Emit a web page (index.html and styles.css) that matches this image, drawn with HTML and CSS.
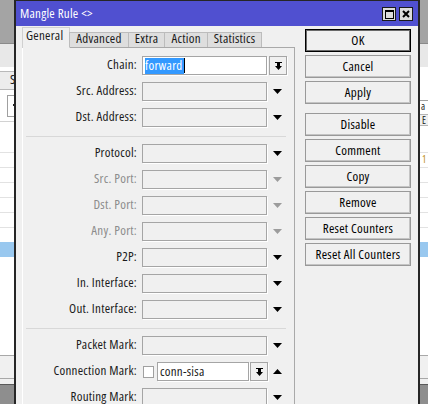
FILE: index.html
```html
<!DOCTYPE html>
<html>
<head>
<meta charset="utf-8">
<title>Mangle Rule</title>
<link rel="stylesheet" href="styles.css">
</head>
<body>
<div class="desk">
  <div class="app">
    <div class="app-top"></div>
    <div class="app-toolbar"></div>
    <div class="app-main">
      <div class="strip strip-left">
        <div class="ls-tab">S</div>
        <div class="ls-btn"><span class="ls-mark"></span></div>
        <div class="ls-head"></div>
        <div class="rows">
          <div class="lrow"></div><div class="lrow"></div><div class="lrow"></div>
          <div class="lrow"></div><div class="lrow"></div><div class="lrow"></div>
          <div class="lrow selected"></div>
        </div>
      </div>
      <div class="app-mid"></div>
      <div class="strip strip-right">
        <div class="rs-input">a</div>
        <div class="rs-head">E</div>
        <div class="rows">
          <div class="lrow num">1</div><div class="lrow"></div><div class="lrow"></div>
          <div class="lrow"></div><div class="lrow"></div><div class="lrow"></div>
          <div class="lrow selected"></div>
        </div>
      </div>
    </div>
    <div class="app-status"></div>
    <div class="app-foot"></div>
    <div class="app-bottom"></div>
  </div>

  <div class="win">
    <div class="titlebar">
      <span class="title">Mangle Rule &lt;&gt;</span>
      <div class="tb-btns">
        <span class="tb-btn"><svg width="9" height="9" viewBox="0 0 9 9"><rect x="0.5" y="0.5" width="8" height="8" fill="none" stroke="#000"/><rect x="0" y="0" width="9" height="2" fill="#000"/></svg></span>
        <span class="tb-btn"><svg width="8" height="8" viewBox="0 0 8 8"><path d="M1 1L7 7M7 1L1 7" stroke="#000" stroke-width="2"/></svg></span>
      </div>
    </div>
    <div class="win-body">
      <div class="form-area">
        <div class="tabs">
          <div class="tab active">General</div>
          <div class="tab">Advanced</div>
          <div class="tab">Extra</div>
          <div class="tab">Action</div>
          <div class="tab">Statistics</div>
        </div>
        <div class="panel">
          <div class="frow">
            <span class="flabel">Chain:</span>
            <div class="field edit"><span class="sel">forward</span><span class="caret"></span></div>
            <span class="ddbtn"><svg width="7" height="8" viewBox="0 0 7 8"><rect x="0" y="0" width="7" height="1" fill="#000"/><rect x="2" y="1" width="3" height="3" fill="#000"/><polygon points="0,4 7,4 3.5,8" fill="#000"/></svg></span>
          </div>
          <div class="frow">
            <span class="flabel">Src. Address:</span>
            <div class="field"></div>
            <span class="arrow"><svg width="9" height="5" viewBox="0 0 9 5"><polygon points="0,0 9,0 4.5,5"/></svg></span>
          </div>
          <div class="frow">
            <span class="flabel">Dst. Address:</span>
            <div class="field"></div>
            <span class="arrow"><svg width="9" height="5" viewBox="0 0 9 5"><polygon points="0,0 9,0 4.5,5"/></svg></span>
          </div>
          <div class="sep"></div>
          <div class="frow">
            <span class="flabel">Protocol:</span>
            <div class="field"></div>
            <span class="arrow"><svg width="9" height="5" viewBox="0 0 9 5"><polygon points="0,0 9,0 4.5,5"/></svg></span>
          </div>
          <div class="frow disabled">
            <span class="flabel">Src. Port:</span>
            <div class="field"></div>
            <span class="arrow"><svg width="9" height="5" viewBox="0 0 9 5"><polygon points="0,0 9,0 4.5,5"/></svg></span>
          </div>
          <div class="frow disabled">
            <span class="flabel">Dst. Port:</span>
            <div class="field"></div>
            <span class="arrow"><svg width="9" height="5" viewBox="0 0 9 5"><polygon points="0,0 9,0 4.5,5"/></svg></span>
          </div>
          <div class="frow disabled">
            <span class="flabel">Any. Port:</span>
            <div class="field"></div>
            <span class="arrow"><svg width="9" height="5" viewBox="0 0 9 5"><polygon points="0,0 9,0 4.5,5"/></svg></span>
          </div>
          <div class="frow">
            <span class="flabel">P2P:</span>
            <div class="field"></div>
            <span class="arrow"><svg width="9" height="5" viewBox="0 0 9 5"><polygon points="0,0 9,0 4.5,5"/></svg></span>
          </div>
          <div class="frow">
            <span class="flabel">In. Interface:</span>
            <div class="field"></div>
            <span class="arrow"><svg width="9" height="5" viewBox="0 0 9 5"><polygon points="0,0 9,0 4.5,5"/></svg></span>
          </div>
          <div class="frow">
            <span class="flabel">Out. Interface:</span>
            <div class="field"></div>
            <span class="arrow"><svg width="9" height="5" viewBox="0 0 9 5"><polygon points="0,0 9,0 4.5,5"/></svg></span>
          </div>
          <div class="sep"></div>
          <div class="frow">
            <span class="flabel">Packet Mark:</span>
            <div class="field"></div>
            <span class="arrow"><svg width="9" height="5" viewBox="0 0 9 5"><polygon points="0,0 9,0 4.5,5"/></svg></span>
          </div>
          <div class="frow">
            <span class="flabel">Connection Mark:</span>
            <span class="check"></span>
            <div class="field edit short">conn-sisa</div>
            <span class="ddbtn sm"><svg width="7" height="8" viewBox="0 0 7 8"><rect x="0" y="0" width="7" height="1" fill="#000"/><rect x="2" y="1" width="3" height="3" fill="#000"/><polygon points="0,4 7,4 3.5,8" fill="#000"/></svg></span>
            <span class="arrow up"><svg width="9" height="5" viewBox="0 0 9 5"><polygon points="0,5 9,5 4.5,0"/></svg></span>
          </div>
          <div class="frow">
            <span class="flabel">Routing Mark:</span>
            <div class="field"></div>
            <span class="arrow"><svg width="9" height="5" viewBox="0 0 9 5"><polygon points="0,0 9,0 4.5,5"/></svg></span>
          </div>
        </div>
      </div>
      <div class="actions">
        <button class="btn default">OK</button>
        <button class="btn">Cancel</button>
        <button class="btn">Apply</button>
        <button class="btn spaced">Disable</button>
        <button class="btn">Comment</button>
        <button class="btn">Copy</button>
        <button class="btn">Remove</button>
        <button class="btn">Reset Counters</button>
        <button class="btn">Reset All Counters</button>
      </div>
    </div>
  </div>
</div>
</body>
</html>
```

FILE: styles.css
```css
* { box-sizing: border-box; }
html, body { margin: 0; padding: 0; }
body {
  width: 428px;
  height: 404px;
  overflow: hidden;
  font-family: "Open Sans", "Liberation Sans", Arial, sans-serif;
  font-stretch: 75%;
  font-size: 13px;
  letter-spacing: 0.25px;
  color: #1a1a1a;
}
.desk { position: relative; width: 428px; height: 404px; overflow: hidden; }

/* background application */
.app { display: flex; flex-direction: column; height: 404px; }
.app-top { flex: none; height: 43px; background: #a4a4a4; }
.app-toolbar { flex: none; height: 24px; background: #e8e8e8; border-top: 1px solid #8a8a8a; }
.app-main {
  flex: none;
  height: 288px;
  background: #fff;
  display: grid;
  grid-template-columns: 14px 1fr 9px;
}
.strip { display: flex; flex-direction: column; }
.strip-right { overflow: hidden; }
.ls-tab {
  margin-top: 4px;
  width: 30px;
  height: 19px;
  background: #ececec;
  border: 1px solid #b9b9b9;
  border-left: none;
  padding-left: 10px;
  line-height: 15px;
  white-space: nowrap;
}
.ls-btn {
  margin-top: 5px;
  margin-left: 7px;
  width: 20px;
  height: 22px;
  border: 1px solid #a0a0a0;
  background: #fff;
  position: relative;
}
.ls-mark {
  position: absolute;
  left: 5px;
  top: 8px;
  width: 3px;
  height: 2px;
  background: #222;
}
.ls-head { margin-top: 4px; height: 1px; background: #d2d2d2; margin-bottom: 30px; }
.rows { display: flex; flex-direction: column; }
.lrow { height: 15px; border-top: 1px solid #e2e2e2; font-size: 10px; line-height: 13px; white-space: nowrap; }
.lrow.selected { background: #99c8ef; border-top-color: #99c8ef; }
.lrow.num { color: #c09020; padding-left: 3px; }
.rs-input {
  margin-top: 33px;
  height: 13px;
  border-top: 1px solid #a0a0a0;
  border-left: 1px solid #a0a0a0;
  padding-left: 1px;
  font-size: 10px;
  line-height: 11px;
  white-space: nowrap;
  overflow: hidden;
}
.rs-head {
  margin-top: 1px;
  height: 12px;
  border: 1px solid #b5b5b5;
  border-right: none;
  background: #f0f0f0;
  padding-left: 2px;
  font-size: 10px;
  line-height: 10px;
  white-space: nowrap;
  overflow: hidden;
  margin-bottom: 26px;
}
.app-status { flex: none; height: 24px; background: #f0f0f0; border-top: 1px solid #a8a8a8; border-bottom: 1px solid #a8a8a8; }
.app-foot { flex: none; height: 6px; background: #f0f0f0; border-bottom: 1px solid #5a5a5a; }
.app-bottom { flex: 1; background: #8e8e8e; }

/* window */
.win {
  position: absolute;
  left: 14px;
  top: 0;
  width: 406px;
  height: 430px;
  border: 2px solid #262626;
  border-top-width: 1px;
  background: #f0f0f0;
  display: flex;
  flex-direction: column;
}
.titlebar {
  flex: none;
  height: 25px;
  background: #5050d0;
  color: #fff;
  display: flex;
  align-items: center;
  justify-content: space-between;
  padding: 0 5px 0 4px;
}
.title { white-space: nowrap; line-height: 17px; padding-bottom: 1px; }
.tb-btns { display: flex; gap: 3px; margin-top: 1px; }
.tb-btn {
  width: 14px;
  height: 14px;
  background: #dcdcdc;
  border: 1px solid #1a1a1a;
  display: flex;
  align-items: center;
  justify-content: center;
}
.win-body { flex: 1; display: flex; }
.form-area { width: 279px; padding-left: 6px; display: flex; flex-direction: column; }

.tabs { flex: none; height: 21px; display: flex; align-items: flex-end; position: relative; z-index: 1; }
.tab {
  height: 15px;
  padding: 0 6px;
  background: #dedede;
  border: 1px solid #bcbcbc;
  border-bottom: none;
  line-height: 10px;
  white-space: nowrap;
  margin-left: -1px;
}
.tab:first-child { margin-left: 0; }
.tab.active {
  height: 21px;
  margin-bottom: -1px;
  background: #f0f0f0;
  border-color: #d0d0d0;
  line-height: 15px;
  padding: 0 6px 0 3px;
}

.panel {
  flex: 1;
  border-top: 1px solid #a9a9a9;
  border-right: 1px solid #a9a9a9;
  border-left: 1px solid #fff;
  padding-top: 8px;
}
.frow { display: flex; align-items: center; height: 26px; padding-bottom: 7px; }
.flabel {
  width: 114px;
  margin-right: 5px;
  text-align: right;
  line-height: 17px;
  padding-bottom: 2px;
  white-space: nowrap;
}
.frow.disabled .flabel { color: #8c8c8c; }
.frow.disabled .arrow svg { fill: #9c9c9c; }
.field {
  width: 125px;
  height: 19px;
  border: 1px solid #a5a5a5;
  box-shadow: 1px 1px 0 #fff;
  background: #f0f0f0;
}
.field.edit {
  background: #fff;
  padding-left: 2px;
  display: flex;
  align-items: center;
  white-space: nowrap;
  line-height: 15px;
}
.field.short { width: 92px; margin-left: 3px; padding-bottom: 1px; }
.sel { background: #3399ff; color: #fff; line-height: 15px; padding: 0 1px 1px 0; }
.caret { width: 1px; height: 15px; background: #000; }
.ddbtn {
  width: 18px;
  height: 19px;
  margin-left: 2px;
  border: 1px solid #a5a5a5;
  box-shadow: 1px 1px 0 #fff;
  background: #f0f0f0;
  display: flex;
  align-items: center;
  justify-content: center;
}
.ddbtn.sm { margin-left: 1px; }
.arrow { padding-left: 6px; display: flex; align-items: center; }
.arrow.up { padding-left: 5px; }
.arrow svg { fill: #000; }
.check {
  width: 11px;
  height: 12px;
  margin-left: 1px;
  border: 1px solid #a0a0a0;
  background: #fff;
}
.sep { height: 8px; margin: 2px 8px 0 3px; border-top: 1px solid #d8d8d8; }

.actions {
  width: 106px;
  margin-left: 10px;
  padding-top: 3px;
  display: flex;
  flex-direction: column;
  gap: 3px;
}
.btn {
  height: 23px;
  padding: 0 0 2px;
  font: inherit;
  letter-spacing: inherit;
  color: #000;
  background: #f0f0f0;
  border: 1px solid #999;
  box-shadow: inset -1px -1px 0 #c4c4c4;
  white-space: nowrap;
}
.btn.default { border-color: #000; box-shadow: inset 0 0 0 1px #6a6a6a; }
.btn.spaced { margin-top: 6px; }
```
